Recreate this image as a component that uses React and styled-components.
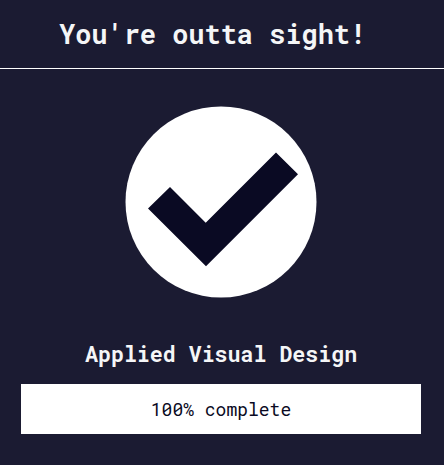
import React from "react";
import styled, { createGlobalStyle } from "styled-components";

const GlobalStyle = createGlobalStyle`
  body { margin: 0; background: #1b1b32; }
`;
const Dialog = styled.main`
  display: flex;
  flex-direction: column;
  height: 465px;
  background: #1b1b32;
  color: #f5f6f7;
  font-family: "Roboto Mono", "DejaVu Sans Mono", monospace;
`;
const Header = styled.header`
  height: 68px;
  border-bottom: 1px solid #fff;
`;
const Title = styled.h1`
  margin: 0 0 0 59px;
  font-size: 26.95px;
  line-height: 68px;
  white-space: pre;
`;
const Body = styled.section`
  padding: 37px 23px 0 21px;
`;
const Check = styled.svg`
  display: block;
  width: 192px;
  height: 192px;
  margin: 0 0 0 104px;
`;
const Subtitle = styled.h2`
  margin: 42px 0 17px 64px;
  font-size: 21.6px;
  line-height: 27px;
  white-space: pre;
`;
const Progress = styled.div`
  height: 50px;
  background: #fff;
  color: #0a0a23;
  font-size: 18px;
  line-height: 50px;
  text-align: center;
`;

export default function App() {
  return (
    <Dialog>
      <GlobalStyle />
      <Header><Title>You're outta sight!</Title></Header>
      <Body>
        <Check viewBox="0 0 192 192">
          <circle cx="96" cy="96" r="95.5" fill="#fff" />
          <path d="M23 102.5 45 81 80.7 116.7 151 46.5 173 68.2 81 160.2Z" fill="#0a0a23" />
        </Check>
        <Subtitle>Applied Visual Design</Subtitle>
        <Progress>100% complete</Progress>
      </Body>
    </Dialog>
  );
}
